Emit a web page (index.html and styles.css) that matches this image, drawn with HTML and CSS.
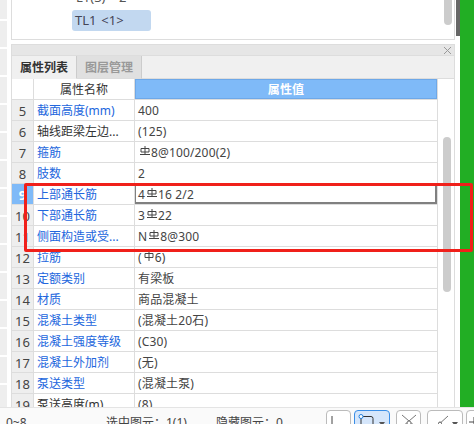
FILE: index.html
```html
<!DOCTYPE html>
<html lang="zh">
<head>
<meta charset="utf-8">
<title>属性列表</title>
<link rel="stylesheet" href="styles.css">
</head>
<body>
<svg width="0" height="0" class="defs"><defs>
<symbol id="rebar" viewBox="0 0 10 10"><path d="M1 2.500h8v3.500h-8zM5 0v8M0 8.500h10" fill="none" stroke="#444" stroke-width="1"/></symbol>
<symbol id="plain" viewBox="0 0 10 10"><path d="M1 2.500h8v4h-8zM5 0v10" fill="none" stroke="#444" stroke-width="1"/></symbol>
</defs></svg>
<div class="app">
  <div class="main">
    <aside class="strip"><i></i><i></i><i></i><i></i><i></i><i></i><i></i><i></i><i></i><i></i><i></i><i></i><i></i><i></i></aside>
    <div class="panels">
      <section class="tree">
        <div class="cut">L1(3) &nbsp; &nbsp;2</div>
        <div class="node">TL1 &lt;1&gt;</div>
        <div class="tree-bar"><b></b></div>
      </section>
      <section class="props">
        <div class="dock"><svg class="close" width="9" height="9" viewBox="0 0 9 9"><path d="M1 1l7 7M8 1L1 8" stroke="#999" stroke-width="1"/></svg></div>
        <div class="tabs"><span class="tab on">属性列表</span><span class="tab">图层管理</span></div>
        <div class="grid-wrap">
          <div class="grid">
            <div class="row head"><div class="n"></div><div class="k">属性名称</div><div class="v">属性值</div></div>
            <div class="row"><div class="n">5</div><div class="k link">截面高度(mm)</div><div class="v">400</div></div>
            <div class="row"><div class="n">6</div><div class="k">轴线距梁左边...</div><div class="v">(125)</div></div>
            <div class="row"><div class="n">7</div><div class="k link">箍筋</div><div class="v"><svg class="bar"><use href="#rebar"/></svg>8@100/200(2)</div></div>
            <div class="row"><div class="n">8</div><div class="k link">肢数</div><div class="v">2</div></div>
            <div class="row sel"><div class="n">9</div><div class="k link">上部通长筋</div><div class="v">4<svg class="bar"><use href="#rebar"/></svg>16 2/2</div></div>
            <div class="row"><div class="n">10</div><div class="k link">下部通长筋</div><div class="v">3<svg class="bar"><use href="#rebar"/></svg>22</div></div>
            <div class="row"><div class="n">11</div><div class="k link">侧面构造或受...</div><div class="v">N<svg class="bar"><use href="#rebar"/></svg>8@300</div></div>
            <div class="row"><div class="n">12</div><div class="k link">拉筋</div><div class="v">(<svg class="bar"><use href="#plain"/></svg>6)</div></div>
            <div class="row"><div class="n">13</div><div class="k link">定额类别</div><div class="v">有梁板</div></div>
            <div class="row"><div class="n">14</div><div class="k link">材质</div><div class="v">商品混凝土</div></div>
            <div class="row"><div class="n">15</div><div class="k link">混凝土类型</div><div class="v">(混凝土20石)</div></div>
            <div class="row"><div class="n">16</div><div class="k link">混凝土强度等级</div><div class="v">(C30)</div></div>
            <div class="row"><div class="n">17</div><div class="k link">混凝土外加剂</div><div class="v">(无)</div></div>
            <div class="row"><div class="n">18</div><div class="k link">泵送类型</div><div class="v">(混凝土泵)</div></div>
            <div class="row"><div class="n">19</div><div class="k">泵送高度(m)</div><div class="v">(8)</div></div>
          </div>
          <div class="grid-bar"><b></b></div>
        </div>
      </section>
    </div>
    <div class="side"><div class="side-dark"></div><div class="green"></div></div>
  </div>
  <footer class="status">
    <span class="s1">0~8</span>
    <span class="s2">选中图元：1(1)</span>
    <span class="s3">隐藏图元：0</span>
    <div class="tools">
      <span class="tool t1"><svg width="12" height="12" viewBox="0 0 12 12"><path d="M2 1v10h7" fill="none" stroke="#444"/></svg></span>
      <span class="tool t2 active"><svg width="20" height="16" viewBox="0 0 20 16"><path d="M4 3.500h10a2 2 0 0 1 2 2V16M4 4v12" fill="none" stroke="#333"/><circle cx="4" cy="3.500" r="2" fill="#fff" stroke="#1e7fe0"/></svg><em></em></span>
      <span class="tool t3"><svg width="20" height="14" viewBox="0 0 20 14"><path d="M3 1l14 12M17 1L3 13" stroke="#777" fill="none"/><circle cx="10" cy="9" r="2" fill="#fff" stroke="#777"/></svg></span>
      <span class="tool t4"><svg width="14" height="14" viewBox="0 0 14 14"><path d="M2 12L13 2" stroke="#777"/><circle cx="5" cy="9.500" r="1.500" fill="#fff" stroke="#555"/></svg><em></em></span>
      <span class="tool t5"><svg width="10" height="12" viewBox="0 0 10 12"><path d="M5 2v10M0 7h10" stroke="#444"/></svg></span>
    </div>
  </footer>
  <div class="callout"></div>
</div>
</body>
</html>
```
FILE: styles.css
```css
* { box-sizing: border-box; }
html, body { margin: 0; padding: 0; }
body { width: 474px; height: 424px; overflow: hidden; background: #fff; font-family: "Noto Sans", "Noto Sans CJK SC", sans-serif; font-size: 12px; color: #333; }
.defs { position: absolute; }
.app { position: relative; width: 474px; height: 424px; display: flex; flex-direction: column; overflow: hidden; }
.main { display: flex; height: 407px; flex: none; }
.strip { width: 7px; flex: none; background: #eee; display: flex; flex-direction: column; gap: 26px; padding-top: 19px; overflow: hidden; }
.strip i { display: block; height: 2px; background: #fff; flex: none; }
.panels { width: 444px; margin-left: 4px; flex: none; display: flex; flex-direction: column; gap: 4px; }
.tree { position: relative; height: 40px; flex: none; border: 1px solid #ddd; border-top: 0; padding-left: 60px; overflow: hidden; }
.cut { height: 11px; margin-top: -11px; padding-left: 4px; font-size: 13px; line-height: 16px; color: #555; }
.node { width: 79px; height: 21px; margin-top: 10px; background: #c2d8f0; border-radius: 3px; padding-left: 3px; line-height: 21px; font-size: 13px; color: #445; word-spacing: 1.500px; }
.tree-bar { position: absolute; top: 0; right: 2px; width: 8px; height: 25px; }
.tree-bar b { display: block; height: 100%; background: #ccc; border-radius: 0 0 4px 4px; }
.props { flex: 1; min-height: 0; border: 1px solid #ddd; border-bottom: 0; display: flex; flex-direction: column; overflow: hidden; }
.dock { height: 11px; flex: none; background: #e6e6e6; border-bottom: 1px solid #ddd; display: flex; justify-content: flex-end; align-items: center; padding-right: 2px; }
.tabs { height: 23px; flex: none; background: #f0f0f0; border-bottom: 1px solid #ddd; display: flex; }
.tab { width: 65px; height: 23px; line-height: 24px; text-align: center; font-size: 12px; font-weight: 700; color: #999; background: #e0e0e0; border-right: 1px solid #ccc; border-bottom: 1px solid #ddd; }
.tab.on { color: #333; background: #f0f0f0; border-bottom-color: #f0f0f0; }
.grid-wrap { flex: 1; min-height: 0; display: flex; }
.grid { width: 426px; flex: none; border-right: 1px solid #ddd; }
.row { display: flex; height: 21px; border-bottom: 1px solid #ddd; line-height: 22px; }
.n { width: 22px; flex: none; background: #eee; border-right: 1px solid #ddd; text-align: center; font-size: 13px; color: #444; }
.k { width: 101px; flex: none; padding-left: 3px; border-right: 1px solid #ddd; white-space: nowrap; overflow: hidden; }
.link { color: #2266dd; }
.v { flex: 1; min-width: 0; padding-left: 3px; white-space: nowrap; color: #444; letter-spacing: .15px; }
.bar { display: inline-block; width: 10px; height: 10px; margin: 0 1px 0 2px; vertical-align: 1px; }
.head .n { background: #fff; }
.head .k { text-align: center; padding-left: 0; }
.head .v { background: #7fbaf8; border: 1px solid #6ea8e8; color: #fff; font-weight: 700; text-align: center; padding: 0; line-height: 20px; }
.sel .n { background: #7fbaf8; color: #fff; font-weight: 700; }
.sel .v { border: 2px solid #808080; border-width: 1px 2px 2px 1px; padding-left: 2px; line-height: 20px; }
.grid-bar { flex: 1; padding: 58px 2px 0 5px; }
.grid-bar b { display: block; width: 8px; height: 155px; background: #ccc; border-radius: 4px; }
.side { flex: 1; display: flex; flex-direction: column; position: relative; margin-left: 1px; padding-left: 4px; }
.side-dark { position: absolute; left: 0; top: 0; width: 4px; height: 36px; background: #666; }
.green { flex: 1; background: #22ae24; }
.status { flex: 1; display: flex; background: #fafafa; font-size: 12px; color: #444; overflow: hidden; padding-top: 6px; border-top: 1px solid #e4e4e4; line-height: 18px; }
.s1 { width: 106px; padding-left: 6px; flex: none; }
.s2 { width: 110px; flex: none; }
.s3 { width: 110px; flex: none; }
.tools { display: flex; margin-top: -4px; }
.tool { height: 22px; flex: none; border: 1px solid #bbb; border-radius: 4px; background: #fff; position: relative; overflow: hidden; padding: 3px 0 0 3px; display: block; }
.t1 { width: 25px; margin-right: 3px; }
.t2 { width: 36px; margin-right: 6px; padding-left: 2px; padding-top: 2px; }
.t3 { width: 25px; margin-right: 6px; padding-left: 2px; }
.t4 { width: 36px; margin-right: 3px; padding-left: 7px; }
.t5 { width: 14px; padding-left: 2px; }
.active { background: #d5e6fb; border-color: #3a8ee6; }
.tool em { position: absolute; right: 4px; top: 11px; border: 3px solid transparent; border-top: 4px solid #555; border-bottom: 0; }
.callout { position: absolute; left: 24px; top: 183px; width: 449px; height: 69px; border: 3px solid #f0201a; border-radius: 2px; }
```
